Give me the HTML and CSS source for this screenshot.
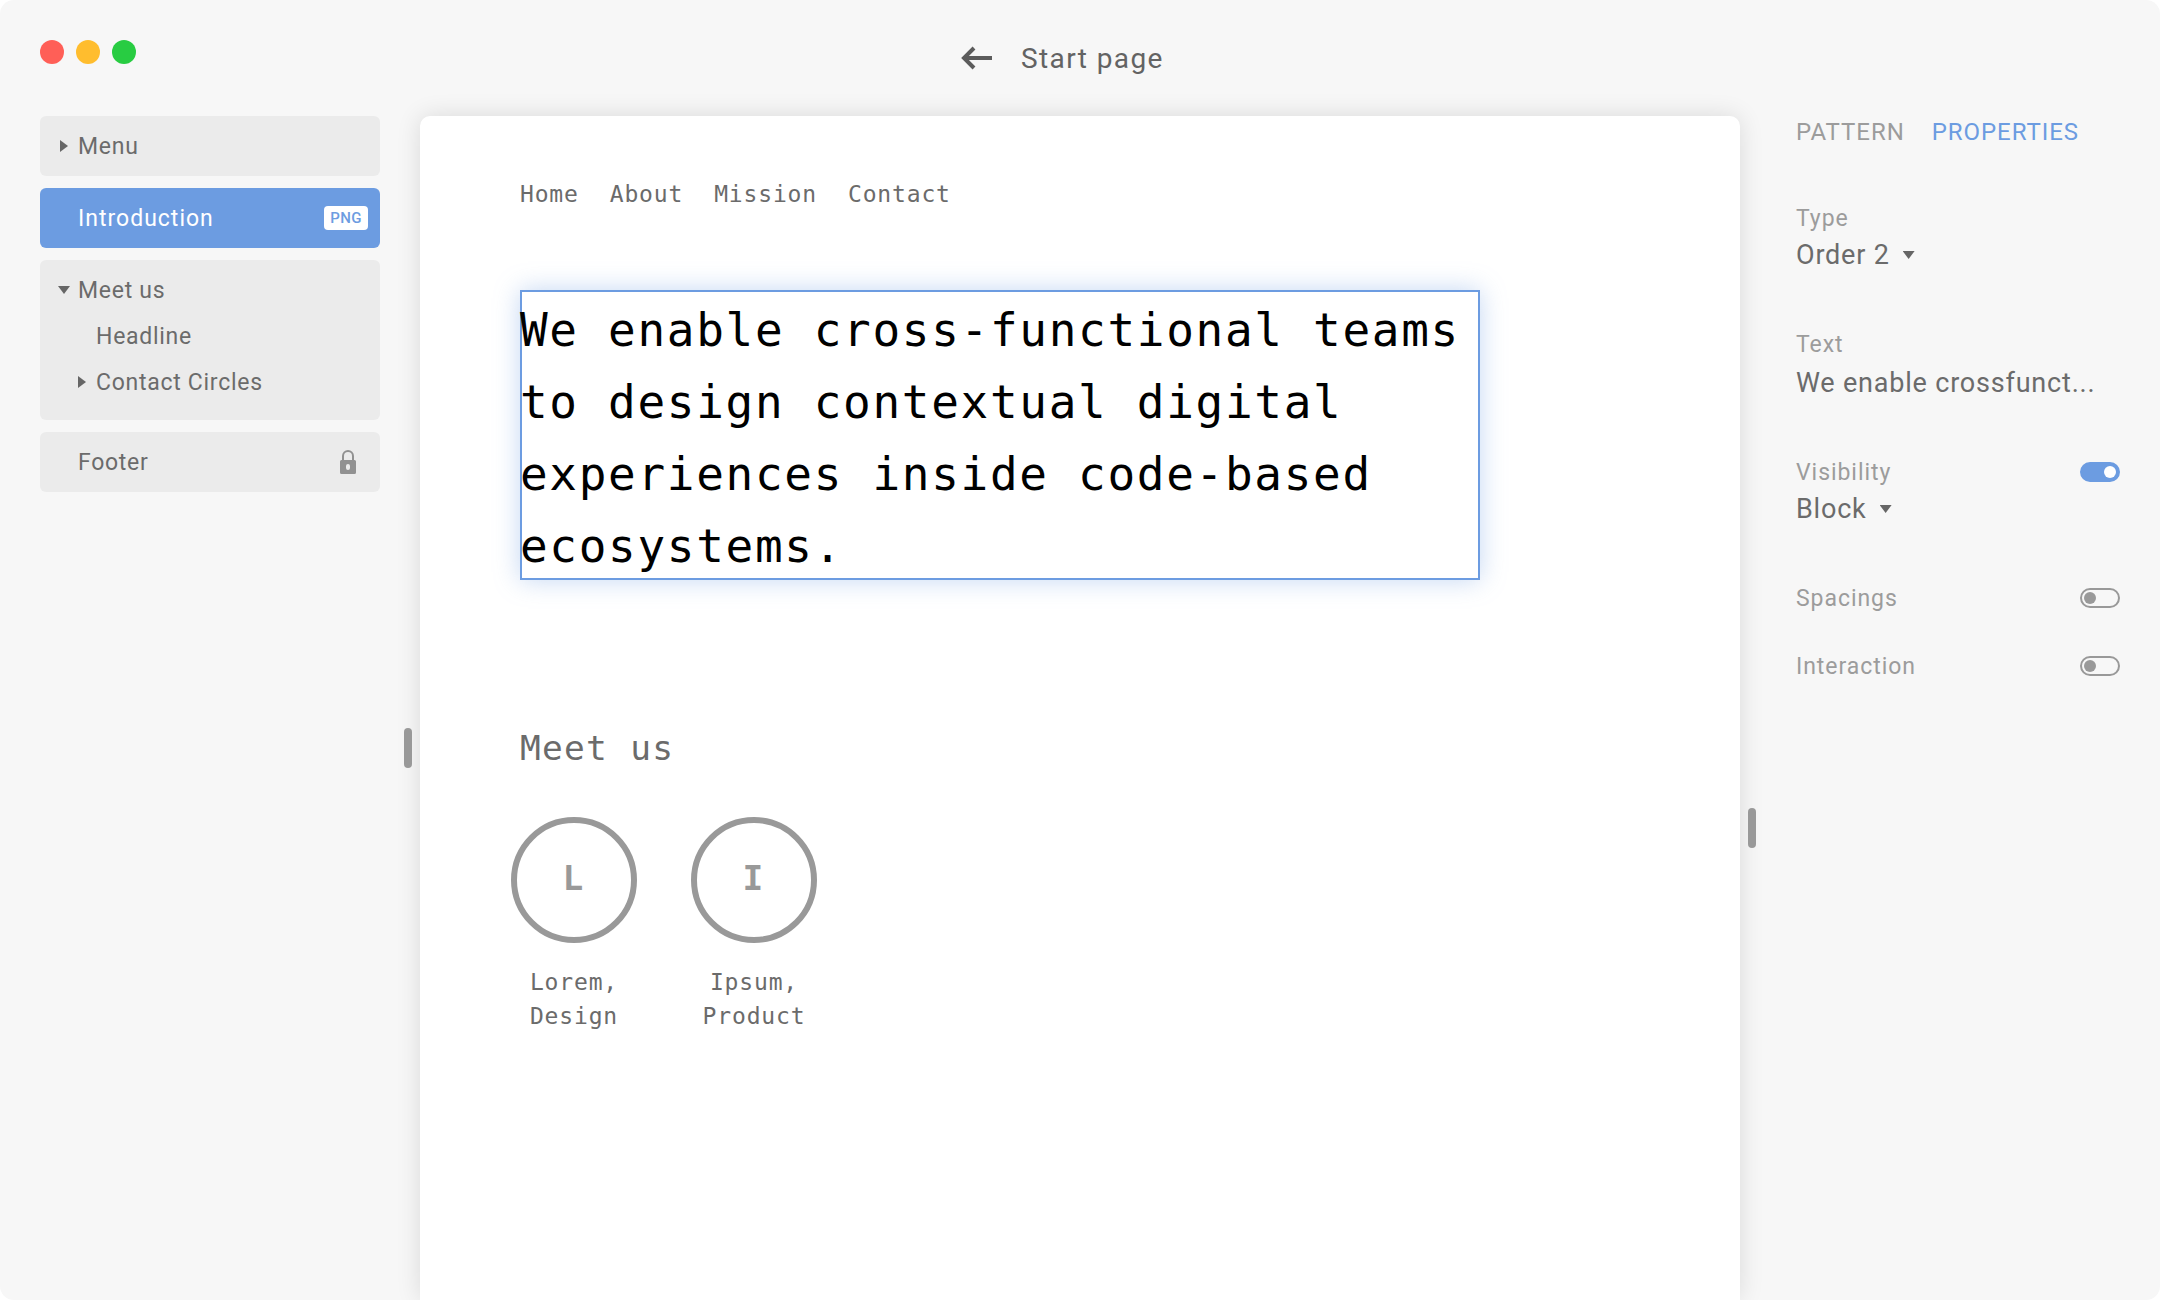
FILE: index.html
```html
<!DOCTYPE html>
<html lang="en">
<head>
<meta charset="utf-8">
<title>Start page</title>
<link rel="stylesheet" href="styles.css">
</head>
<body>
<div class="window">
  <header class="titlebar">
    <div class="lights"><i class="light close"></i><i class="light minimize"></i><i class="light maximize"></i></div>
    <div class="title">
      <svg class="back" width="34" height="24" viewBox="0 0 34 24"><path d="M32 12H4M14 2L4 12L14 22" fill="none" stroke="#5c5c5c" stroke-width="4"/></svg>
      <span>Start page</span>
    </div>
  </header>
  <div class="main">
    <aside class="tree">
      <div class="item"><i class="arrow right"></i><span>Menu</span></div>
      <div class="item active"><span>Introduction</span><b class="badge">PNG</b></div>
      <div class="group">
        <div class="row"><i class="arrow down"></i><span>Meet us</span></div>
        <div class="row child"><span>Headline</span></div>
        <div class="row child"><i class="arrow right"></i><span>Contact Circles</span></div>
      </div>
      <div class="item"><span>Footer</span>
        <svg class="lock" width="16" height="24" viewBox="0 0 16 24"><path d="M3 11V6a5 5 0 0 1 10 0v5" fill="none" stroke="#919191" stroke-width="2"/><path fill="#919191" fill-rule="evenodd" d="M1.5 10h13a1.5 1.5 0 0 1 1.5 1.500v11a1.500 1.500 0 0 1-1.500 1.500h-13a1.500 1.500 0 0 1-1.500-1.500v-11a1.500 1.500 0 0 1 1.500-1.500zM8 14a2 2 0 0 0-2 2v2a2 2 0 0 0 4 0v-2a2 2 0 0 0-2-2z"/></svg>
      </div>
    </aside>
    <main class="canvas">
      <nav class="nav"><span>Home</span><span>About</span><span>Mission</span><span>Contact</span></nav>
      <h1 class="headline">We enable cross-functional teams<br>to design contextual digital<br>experiences inside code-based<br>ecosystems.</h1>
      <h2 class="subhead">Meet us</h2>
      <div class="people">
        <div class="person"><div class="circle"><span>L</span></div><p>Lorem,<br>Design</p></div>
        <div class="person"><div class="circle"><span>I</span></div><p>Ipsum,<br>Product</p></div>
      </div>
    </main>
    <aside class="props">
      <div class="tabs"><span class="tab">PATTERN</span><span class="tab current">PROPERTIES</span></div>
      <div class="field"><div class="label">Type</div><div class="value">Order 2<i class="arrow down"></i></div></div>
      <div class="field text"><div class="label">Text</div><div class="value">We enable crossfunct...</div></div>
      <div class="field"><div class="label">Visibility<i class="toggle on"></i></div><div class="value">Block<i class="arrow down"></i></div></div>
      <div class="field single"><div class="label">Spacings<i class="toggle"></i></div></div>
      <div class="field single"><div class="label">Interaction<i class="toggle"></i></div></div>
    </aside>
  </div>
  <i class="handle left"></i>
  <i class="handle right-side"></i>
</div>
</body>
</html>
```
FILE: styles.css
```css
* { box-sizing: border-box; }
body { margin: 0; background: #fff; font-family: Roboto, "Liberation Sans", sans-serif; color: #6b6b6b; }
.window { position: relative; width: 2160px; height: 1300px; background: #f7f7f7; border-radius: 14px; overflow: hidden; display: flex; flex-direction: column; }

/* Title bar */
.titlebar { height: 116px; flex: none; display: grid; grid-template-columns: 961px 1fr; }
.lights { display: flex; gap: 12px; padding: 40px 0 0 40px; }
.light { width: 24px; height: 24px; border-radius: 50%; }
.close { background: #ff5f57; }
.minimize { background: #ffbd2e; }
.maximize { background: #28cc42; }
.title { display: flex; align-items: center; height: 116px; font-size: 28px; letter-spacing: 1.4px; color: #636363; }
.back { margin-left: -1px; margin-right: 27px; }

.main { flex: 1; display: grid; grid-template-columns: 380px 1320px 380px; padding-left: 40px; min-height: 0; }

/* Element tree */
.tree { display: flex; flex-direction: column; gap: 12px; width: 340px; font-size: 23px; letter-spacing: .72px; }
.item { height: 60px; background: #ebebeb; border-radius: 6px; display: flex; align-items: center; padding-left: 38px; flex: none; }
.active { background: #6c9ce1; color: #fff; letter-spacing: 1px; }
.badge { margin-left: auto; margin-right: 12px; width: 44px; height: 24px; border-radius: 4px; background: #fff; color: #6c9ce1; font-size: 15px; font-weight: 500; line-height: 25px; text-align: center; letter-spacing: .3px; }
.lock { margin-left: auto; margin-right: 24px; }
.group { height: 160px; background: #ebebeb; border-radius: 6px; padding-top: 7px; }
.row { height: 46px; display: flex; align-items: center; padding-left: 38px; }
.child { padding-left: 56px; }
.arrow { flex: none; background: #666; }
.arrow.right { width: 8px; height: 12px; clip-path: polygon(0 0, 100% 50%, 0 100%); margin-left: -18px; margin-right: 10px; }
.arrow.down { width: 12px; height: 8px; clip-path: polygon(0 0, 100% 0, 50% 100%); }
.row .arrow.down { margin-left: -20px; margin-right: 8px; }

/* Page preview */
.canvas { background: #fff; border-radius: 10px 10px 0 0; box-shadow: 0 0 24px rgba(0, 0, 0, .12); padding: 58px 100px 0; font-family: "DejaVu Sans Mono", monospace; }
.nav { display: flex; gap: 31px; font-size: 23px; letter-spacing: .84px; line-height: 40px; }
.headline { margin: 76px 0 0; width: 960px; height: 290px; font-weight: 400; font-size: 46px; line-height: 72px; letter-spacing: 1.68px; color: #000; white-space: nowrap; box-shadow: inset 0 0 0 2px #6c9ce1, 0 0 24px rgba(108, 156, 225, .4); padding-top: 4px; }
.subhead { margin: 144px 0 0; font-weight: 400; font-size: 34.5px; line-height: 48px; letter-spacing: 1.26px; }
.people { display: flex; margin: 45px 0 0 -36px; }
.person { width: 180px; text-align: center; }
.circle { margin: 0 auto; width: 126px; height: 126px; border: 6px solid #999; border-radius: 50%; display: flex; align-items: center; justify-content: center; font-weight: 700; font-size: 34.5px; color: #999; padding: 0 2px 5px 0; }
.person p { margin: 22px 0 0; font-size: 23px; line-height: 34px; letter-spacing: .84px; }

/* Properties */
.props { padding-left: 56px; width: 380px; }
.tabs { display: flex; gap: 27px; margin-bottom: 54px; font-size: 24px; line-height: 32px; letter-spacing: .95px; color: #9c9c9c; }
.current { color: #6c9ce1; }
.field { height: 126px; }
.label { display: flex; align-items: center; justify-content: space-between; width: 324px; height: 32px; font-size: 23px; letter-spacing: .95px; color: #9c9c9c; }
.value { display: flex; align-items: center; gap: 13px; height: 42px; font-size: 27px; letter-spacing: .8px; white-space: nowrap; }
.text { height: 128px; }
.text .value { padding-top: 3px; }
.single { height: 68px; }
.toggle { width: 40px; height: 20px; border: 2px solid #999; border-radius: 10px; display: flex; align-items: center; padding: 0 2px; }
.toggle::after { content: ""; width: 12px; height: 12px; border-radius: 50%; background: #999; }
.toggle.on { background: #6c9ce1; border-color: #6c9ce1; justify-content: flex-end; }
.toggle.on::after { background: #fff; }

/* Resize handles */
.handle { position: absolute; width: 8px; height: 40px; border-radius: 4px; background: #999; }
.left { left: 404px; top: 728px; }
.right-side { left: 1748px; top: 808px; }
```
